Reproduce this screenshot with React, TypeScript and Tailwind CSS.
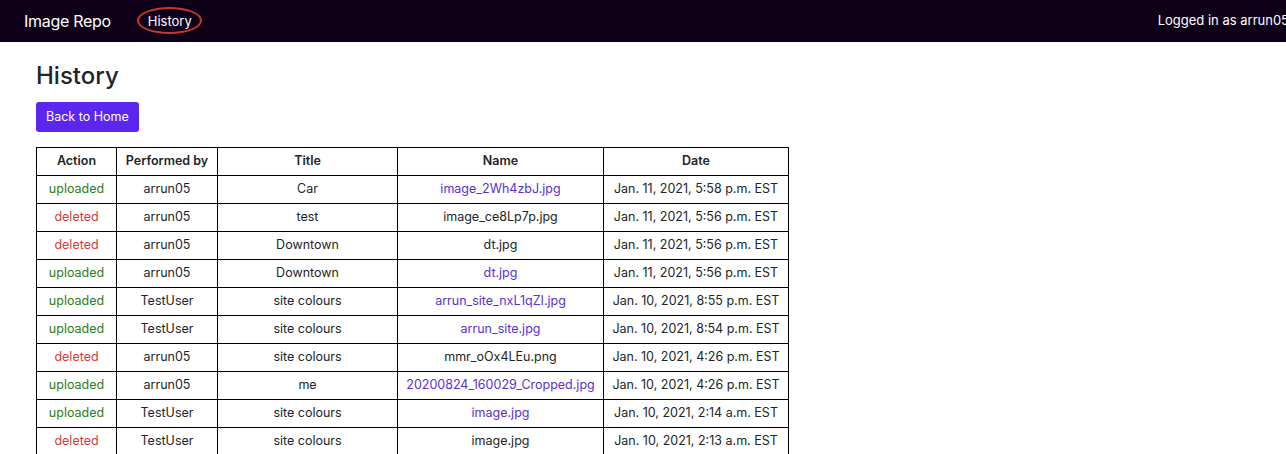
const rows = [
  ["uploaded", "arrun05", "Car", "image_2Wh4zbJ.jpg", "Jan. 11, 2021, 5:58 p.m. EST"],
  ["deleted", "arrun05", "test", "image_ce8Lp7p.jpg", "Jan. 11, 2021, 5:56 p.m. EST"],
  ["deleted", "arrun05", "Downtown", "dt.jpg", "Jan. 11, 2021, 5:56 p.m. EST"],
  ["uploaded", "arrun05", "Downtown", "dt.jpg", "Jan. 11, 2021, 5:56 p.m. EST"],
  ["uploaded", "TestUser", "site colours", "arrun_site_nxL1qZI.jpg", "Jan. 10, 2021, 8:55 p.m. EST"],
  ["uploaded", "TestUser", "site colours", "arrun_site.jpg", "Jan. 10, 2021, 8:54 p.m. EST"],
  ["deleted", "arrun05", "site colours", "mmr_oOx4LEu.png", "Jan. 10, 2021, 4:26 p.m. EST"],
  ["uploaded", "arrun05", "me", "20200824_160029_Cropped.jpg", "Jan. 10, 2021, 4:26 p.m. EST"],
  ["uploaded", "TestUser", "site colours", "image.jpg", "Jan. 10, 2021, 2:14 a.m. EST"],
  ["deleted", "TestUser", "site colours", "image.jpg", "Jan. 10, 2021, 2:13 a.m. EST"],
];

const App = () => {
  return (
    <div className="min-h-screen bg-white text-[#212529] font-['Inter','Liberation_Sans',sans-serif]">
      <nav className="h-[42px] bg-[#0e0019] flex items-center pl-6 text-white">
        <div className="text-[16px] tracking-[-0.3px]">Image Repo</div>
        <div className="relative ml-[37px] text-[13px] leading-[20px]">
          History
          <div className="absolute -left-[11px] -top-[4px] w-[65px] h-[27px] rounded-[50%] border-2 border-[#c23a2b]"></div>
        </div>
        <div className="ml-auto mr-[-3px] text-[13px]">Logged in as arrun05</div>
      </nav>

      <div className="pl-9 pt-[20px]">
        <h1 className="text-[24px] leading-[28px] font-medium">History</h1>
        <button className="mt-[12px] h-[30px] px-[10px] rounded-[3px] bg-[#5b27f0] text-white text-[12.5px]">
          Back to Home
        </button>

        <table className="mt-[15px] table-fixed border-collapse text-[12.5px] text-center">
          <colgroup>
            <col className="w-[80px]" />
            <col className="w-[101px]" />
            <col className="w-[180px]" />
            <col className="w-[206px]" />
            <col className="w-[185px]" />
          </colgroup>
          <thead>
            <tr className="h-[28px]">
              {["Action", "Performed by", "Title", "Name", "Date"].map((h) => (
                <th key={h} className="border border-black font-semibold">
                  {h}
                </th>
              ))}
            </tr>
          </thead>
          <tbody>
            {rows.map((r, i) => (
              <tr key={i} className="h-[28px]">
                <td
                  className={`border border-black ${
                    r[0] === "uploaded" ? "text-[#2b7d12]" : "text-[#d83a3a]"
                  }`}
                >
                  {r[0]}
                </td>
                <td className="border border-black">{r[1]}</td>
                <td className="border border-black">{r[2]}</td>
                <td
                  className={`border border-black whitespace-nowrap ${
                    r[0] === "uploaded" ? "text-[#5a2fd2]" : ""
                  }`}
                >
                  {r[3]}
                </td>
                <td className="border border-black whitespace-nowrap">{r[4]}</td>
              </tr>
            ))}
          </tbody>
        </table>
      </div>
    </div>
  );
};

export default App;
